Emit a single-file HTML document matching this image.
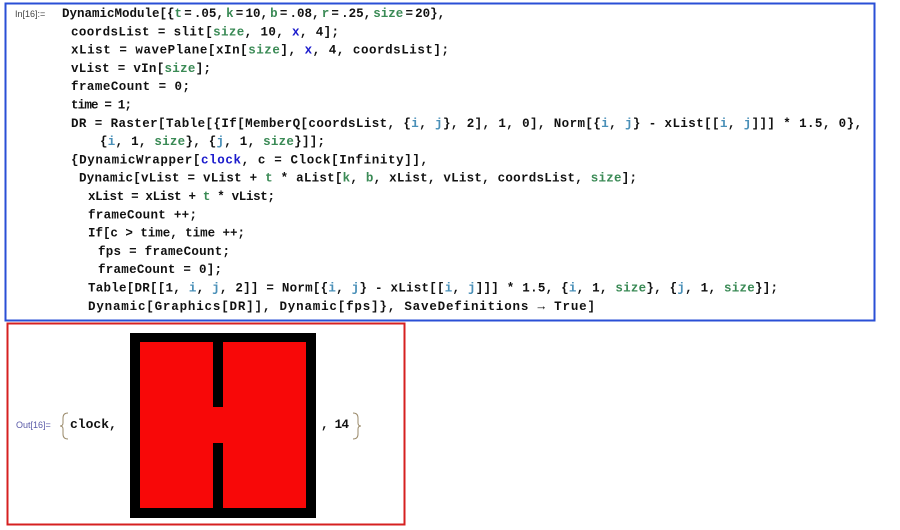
<!DOCTYPE html>
<html><head><meta charset="utf-8"><style>
html,body{margin:0;padding:0;background:#fff;width:900px;height:530px;overflow:hidden}
svg{display:block}
text{font-family:"Liberation Mono",monospace;font-weight:bold;font-size:12.5px;fill:#111}
.g{fill:#3a8a55}.b{fill:#1a1acc}.c{fill:#4a90b8}
.s{font-size:3.6px}
.lbl{font-family:"Liberation Sans",sans-serif;font-weight:normal;font-size:9px;fill:#5a5aa8}
</style></head><body>
<svg width="900" height="530" viewBox="0 0 900 530" xmlns="http://www.w3.org/2000/svg">
<rect x="5.5" y="3.5" width="869" height="317" fill="none" stroke="#2a4fd6" stroke-width="2"/>
<rect x="7.5" y="323.5" width="397" height="201" fill="none" stroke="#d62020" stroke-width="2"/>
<text class="lbl" x="15" y="17" style="fill:#444">In[16]:=</text>
<text x="62" y="17" xml:space="preserve">DynamicModule[{<tspan class="g">t</tspan><tspan class="s"> </tspan>=<tspan class="s"> </tspan>.05,<tspan class="s"> </tspan><tspan class="g">k</tspan><tspan class="s"> </tspan>=<tspan class="s"> </tspan>10,<tspan class="s"> </tspan><tspan class="g">b</tspan><tspan class="s"> </tspan>=<tspan class="s"> </tspan>.08,<tspan class="s"> </tspan><tspan class="g">r</tspan><tspan class="s"> </tspan>=<tspan class="s"> </tspan>.25,<tspan class="s"> </tspan><tspan class="g">size</tspan><tspan class="s"> </tspan>=<tspan class="s"> </tspan>20},</text>
<text x="71" y="35.3" textLength="268" lengthAdjust="spacing">coordsList = slit[<tspan class="g">size</tspan>, 10, <tspan class="b">x</tspan>, 4];</text>
<text x="71" y="53.6" textLength="378" lengthAdjust="spacing">xList = wavePlane[xIn[<tspan class="g">size</tspan>], <tspan class="b">x</tspan>, 4, coordsList];</text>
<text x="71" y="71.9" textLength="140" lengthAdjust="spacing">vList = vIn[<tspan class="g">size</tspan>];</text>
<text x="71" y="90.2" textLength="119" lengthAdjust="spacing">frameCount = 0;</text>
<text x="71" y="108.5" textLength="61" lengthAdjust="spacing">time = 1;</text>
<text x="71" y="126.8" textLength="791" lengthAdjust="spacing">DR = Raster[Table[{If[MemberQ[coordsList, {<tspan class="c">i</tspan>, <tspan class="c">j</tspan>}, 2], 1, 0], Norm[{<tspan class="c">i</tspan>, <tspan class="c">j</tspan>} - xList[[<tspan class="c">i</tspan>, <tspan class="c">j</tspan>]]] * 1.5, 0},</text>
<text x="100" y="145.1" textLength="225" lengthAdjust="spacing">{<tspan class="c">i</tspan>, 1, <tspan class="g">size</tspan>}, {<tspan class="c">j</tspan>, 1, <tspan class="g">size</tspan>}]];</text>
<text x="71" y="163.4" textLength="357" lengthAdjust="spacing">{DynamicWrapper[<tspan class="b">clock</tspan>, c = Clock[Infinity]],</text>
<text x="79" y="181.7" textLength="558" lengthAdjust="spacing">Dynamic[vList = vList + <tspan class="g">t</tspan> * aList[<tspan class="g">k</tspan>, <tspan class="g">b</tspan>, xList, vList, coordsList, <tspan class="g">size</tspan>];</text>
<text x="88" y="200" textLength="187" lengthAdjust="spacing">xList = xList + <tspan class="g">t</tspan> * vList;</text>
<text x="88" y="218.3" textLength="109" lengthAdjust="spacing">frameCount ++;</text>
<text x="88" y="236.6" textLength="157" lengthAdjust="spacing">If[c &gt; time, time ++;</text>
<text x="98" y="254.9" textLength="132" lengthAdjust="spacing">fps = frameCount;</text>
<text x="98" y="273.2" textLength="124" lengthAdjust="spacing">frameCount = 0];</text>
<text x="88" y="291.5" textLength="690" lengthAdjust="spacing">Table[DR[[1, <tspan class="c">i</tspan>, <tspan class="c">j</tspan>, 2]] = Norm[{<tspan class="c">i</tspan>, <tspan class="c">j</tspan>} - xList[[<tspan class="c">i</tspan>, <tspan class="c">j</tspan>]]] * 1.5, {<tspan class="c">i</tspan>, 1, <tspan class="g">size</tspan>}, {<tspan class="c">j</tspan>, 1, <tspan class="g">size</tspan>}];</text>
<text x="88" y="309.8" textLength="507" lengthAdjust="spacing">Dynamic[Graphics[DR]], Dynamic[fps]}, SaveDefinitions → True]</text>
<text class="lbl" x="16" y="428">Out[16]=</text>
<path d="M68 413 Q63 413 63 418 L63 423 Q63 426 60 426 Q63 426 63 429 L63 434 Q63 439 68 439" fill="none" stroke="#9a8a6a" stroke-width="1"/>
<text x="70" y="428" style="font-size:13px">clock,</text>
<text x="321" y="428" textLength="28" lengthAdjust="spacing">, 14</text>
<path d="M353 413 Q358 413 358 418 L358 423 Q358 426 361 426 Q358 426 358 429 L358 434 Q358 439 353 439" fill="none" stroke="#9a8a6a" stroke-width="1"/>
<rect x="130" y="333" width="186" height="185" fill="#000"/>
<rect x="140" y="342" width="166" height="166" fill="#f80808"/>
<rect x="213" y="342" width="10" height="65" fill="#000"/>
<rect x="213" y="443" width="10" height="65" fill="#000"/>
</svg>
</body></html>
